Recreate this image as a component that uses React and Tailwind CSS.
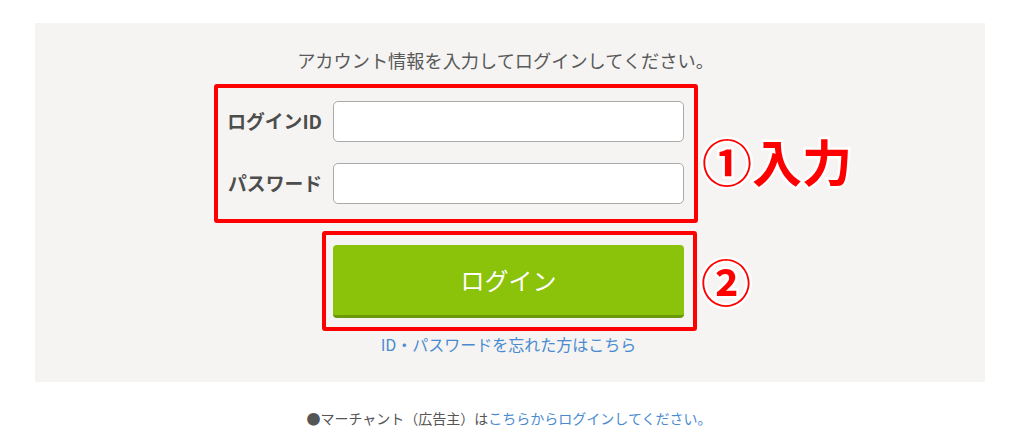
import React from 'react';

const font = { fontFamily: '"Noto Sans CJK JP", "Noto Sans", sans-serif' };

const Mark = ({ children, className = '' }) => (
  <span
    className={`font-bold text-[#ff0000] leading-none [paint-order:stroke_fill] [-webkit-text-stroke:5px_white] ${className}`}
  >
    {children}
  </span>
);

export default function App() {
  return (
    <div className="bg-white w-[1028px] h-[437px] pt-[23px] text-[#555]" style={font}>
      {/* Login panel */}
      <div className="ml-[35px] w-[950px] h-[359px] bg-[#f5f4f2] pt-[24px]">
        <p className="text-center pr-[9px] text-[18.2px] leading-[26px] text-[#595959]">
          アカウント情報を入力してログインしてください。
        </p>

        {/* ① inputs */}
        <div className="flex items-center mt-[11px] ml-[179px]">
          <div className="w-[484px] h-[139px] border-4 border-[#ff0000] rounded-[3px] pt-[13px]">
            <div className="grid grid-cols-[104px_351px] gap-x-[11px] gap-y-[21px] items-center">
              <label className="text-right font-bold text-[18.8px] text-[#4d4d4d]">ログインID</label>
              <input className="h-[41px] bg-white border border-[#aaa] rounded-[5px] px-2 outline-none" />
              <label className="text-right font-bold text-[18.8px] text-[#4d4d4d]">パスワード</label>
              <input type="password" className="h-[41px] bg-white border border-[#aaa] rounded-[5px] px-2 outline-none" />
            </div>
          </div>
          <div className="ml-[4px] mt-[13px] flex items-center">
            <Mark className="text-[50px]">①入力</Mark>
          </div>
        </div>

        {/* ② button */}
        <div className="flex items-center mt-[8px] ml-[287px]">
          <div className="w-[375px] h-[100px] border-4 border-[#ff0000] rounded-[3px] pt-[10px] pl-[7px]">
            <button className="w-[351px] h-[73px] bg-[#8bc20a] rounded-[4px] border-b-[3px] border-[#6b9a08] text-white text-[24px]">
              ログイン
            </button>
          </div>
          <div className="ml-[4px]">
            <Mark className="text-[50px]">②</Mark>
          </div>
        </div>

        <div className="ml-[298px] w-[351px] text-center mt-[1px]">
          <a className="text-[16px] leading-[20px] text-[#4a8bd0]">ID・パスワードを忘れた方はこちら</a>
        </div>
      </div>

      {/* Footer */}
      <p className="mt-[26px] text-center pr-[10px] text-[14px] leading-[20px] text-[#555]">
        ●マーチャント（広告主）は<a className="text-[#4a8bd0]">こちらからログインしてください。</a>
      </p>
    </div>
  );
}
